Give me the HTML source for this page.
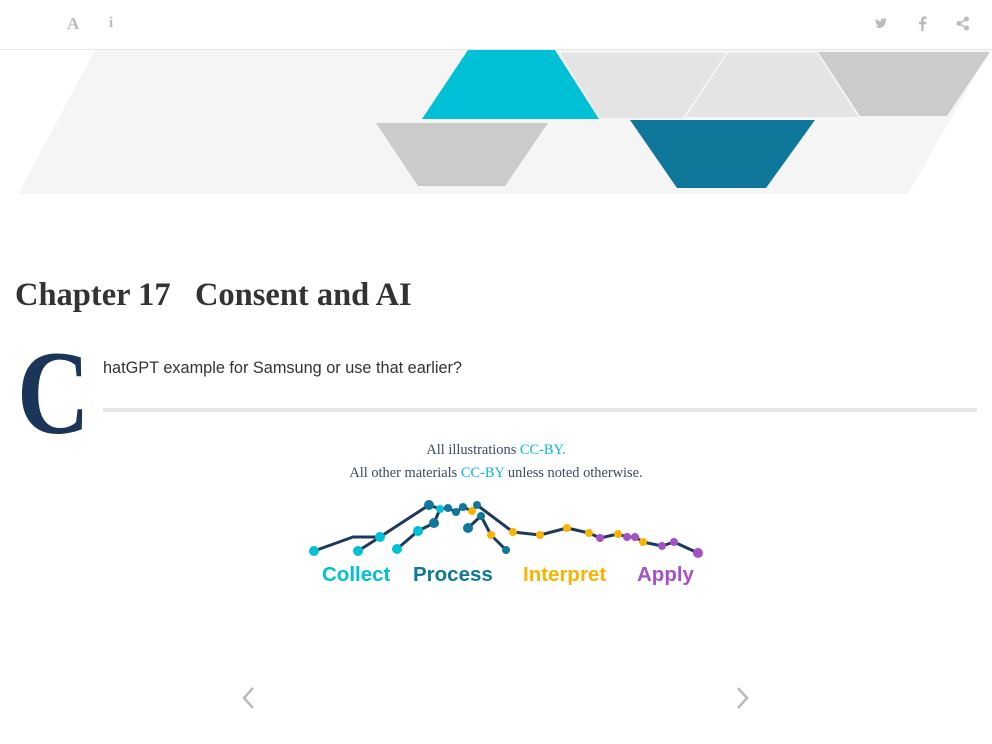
<!DOCTYPE html>
<html><head><meta charset="utf-8"><style>
body{margin:0;width:992px;height:744px;background:#fff;position:relative;overflow:hidden;font-family:"Liberation Serif",serif}
.hdr{position:absolute;left:0;top:0;width:992px;height:49px;border-bottom:1px solid #e6e6e6}
.ic{position:absolute;top:14px;color:#bbb;font-size:17px}
h1{position:absolute;left:15px;top:277px;margin:0;font-size:32.5px;font-weight:bold;color:#333}
.drop{position:absolute;left:17px;top:333px;font-size:120px;line-height:120px;color:#1a3558;font-weight:bold;transform:scaleX(0.84);transform-origin:0 0}
.lead{position:absolute;left:103px;top:359px;font-family:"Liberation Sans",sans-serif;font-size:16.3px;color:#333}
.rule{position:absolute;left:103px;top:408px;width:874px;height:4px;background:#e6e6e6}
.lic{position:absolute;left:0;width:992px;text-align:center;font-size:14.4px;color:#364b6b}
.lic span{color:#00bcd4}
</style></head><body>
<div class="hdr">
<div class="ic" style="left:67px;font-weight:bold">A</div>
<div class="ic" style="left:109px;font-weight:bold;font-size:15px;top:15px">i</div>
<svg style="position:absolute;left:874px;top:17px" width="14" height="13" viewBox="0 0 24 24"><path fill="#bbb" d="M23 4.6a9 9 0 0 1-2.6.7 4.6 4.6 0 0 0 2-2.5 9 9 0 0 1-2.9 1.1 4.5 4.5 0 0 0-7.7 4.1A12.8 12.8 0 0 1 2.5 3.3a4.5 4.5 0 0 0 1.4 6 4.5 4.5 0 0 1-2-.6 4.5 4.5 0 0 0 3.6 4.5 4.5 4.5 0 0 1-2 .1 4.5 4.5 0 0 0 4.2 3.1A9 9 0 0 1 1 18.3 12.8 12.8 0 0 0 7.9 20.3c8.3 0 12.8-6.9 12.8-12.8v-.6A9 9 0 0 0 23 4.6z"/></svg>
<svg style="position:absolute;left:918px;top:16px" width="9" height="15" viewBox="0 0 10 18"><path fill="#bbb" d="M6.5 18V10h2.7l.4-3.1H6.5V5c0-.9.3-1.5 1.6-1.5H9.8V.7C9.5.6 8.5.5 7.4.5 5 .5 3.4 2 3.4 4.6v2.3H.7V10h2.7v8z"/></svg>
<svg style="position:absolute;left:956px;top:16px" width="14" height="15" viewBox="0 0 14 15"><g fill="#bbb"><circle cx="10.5" cy="3" r="2.5"/><circle cx="3" cy="7.5" r="2.5"/><circle cx="10.5" cy="12" r="2.5"/></g><path stroke="#bbb" stroke-width="1.6" d="M3 7.5L10.5 3M3 7.5l7.5 4.5"/></svg>
</div>
<svg style="position:absolute;left:0;top:50px" width="992" height="150" viewBox="0 50 992 150">
<polygon points="95,50 990,50 908,194 18,194" fill="#f5f5f5"/>
<polygon points="468,50 555,50 599,119 422,119" fill="#00c0d6"/>
<polygon points="560,53 726,53 683,118 600,118" fill="#e4e4e4"/>
<polygon points="728,53 817,53 858,117 686,117" fill="#e4e4e4"/>
<polygon points="818,52 990,52 947,116 860,116" fill="#cbcbcb"/>
<polygon points="376,123 548,123 505,186 418,186" fill="#cbcbcb"/>
<polygon points="630,120 815,120 766,188 677,188" fill="#0e779a"/>
</svg>
<h1>Chapter 17&nbsp;&nbsp; Consent and AI</h1>
<div class="drop">C</div>
<div class="lead">hatGPT example for Samsung or use that earlier?</div>
<div class="rule"></div>
<div class="lic" style="top:442px">All illustrations <span>CC-BY.</span></div>
<div class="lic" style="top:465px">All other materials <span>CC-BY</span> unless noted otherwise.</div>
<svg style="position:absolute;left:300px;top:490px" width="410" height="100" viewBox="300 490 410 100">
<g fill="none" stroke="#1c3a5e" stroke-width="3" stroke-linejoin="round">
<polyline points="314,551 353,537 380,537"/>
<polyline points="358,551 380,537 429,505 440,509 448,508 456,512 463,507 472,511 477,505 513,532 540,535 567,528 589,533 600,538 618,534 627,537 635,537 643,542 662,546 674,542 698,553"/>
<polyline points="397,549 418,531 434,523 440,509"/>
<polyline points="468,528 481,516 491,535 506,550"/>
</g>
<g fill="#00c0d6"><circle cx="314" cy="551" r="5"/><circle cx="358" cy="551" r="5"/><circle cx="380" cy="537" r="5"/><circle cx="397" cy="549" r="5"/><circle cx="418" cy="531" r="5"/><circle cx="440" cy="509" r="4"/></g>
<g fill="#0e779a"><circle cx="429" cy="505" r="5"/><circle cx="434" cy="523" r="5"/><circle cx="448" cy="508" r="4"/><circle cx="456" cy="512" r="4"/><circle cx="463" cy="507" r="4"/><circle cx="477" cy="505" r="4"/><circle cx="468" cy="528" r="5"/><circle cx="481" cy="516" r="4"/><circle cx="506" cy="550" r="4"/></g>
<g fill="#fbb300"><circle cx="472" cy="511" r="4"/><circle cx="491" cy="535" r="4"/><circle cx="513" cy="532" r="4"/><circle cx="540" cy="535" r="4"/><circle cx="567" cy="528" r="4"/><circle cx="589" cy="533" r="4"/><circle cx="618" cy="534" r="4"/><circle cx="643" cy="542" r="4"/></g>
<g fill="#a64fc6"><circle cx="600" cy="538" r="4"/><circle cx="627" cy="537" r="4"/><circle cx="635" cy="537" r="4"/><circle cx="662" cy="546" r="4"/><circle cx="674" cy="542" r="4"/><circle cx="698" cy="553" r="5"/></g>
<g font-family="Liberation Sans,sans-serif" font-weight="bold" font-size="20.5">
<text x="322" y="581" fill="#00c0d6">Collect</text>
<text x="413" y="581" fill="#0e779a">Process</text>
<text x="523" y="581" fill="#fbb300">Interpret</text>
<text x="637" y="581" fill="#a64fc6">Apply</text>
</g>
</svg>
<svg style="position:absolute;left:241px;top:686px" width="14" height="24"><path d="M12 2L3 12l9 10" fill="none" stroke="#bbb" stroke-width="2.5"/></svg>
<svg style="position:absolute;left:736px;top:686px" width="14" height="24"><path d="M2 2l9 10-9 10" fill="none" stroke="#bbb" stroke-width="2.5"/></svg>
</body></html>
